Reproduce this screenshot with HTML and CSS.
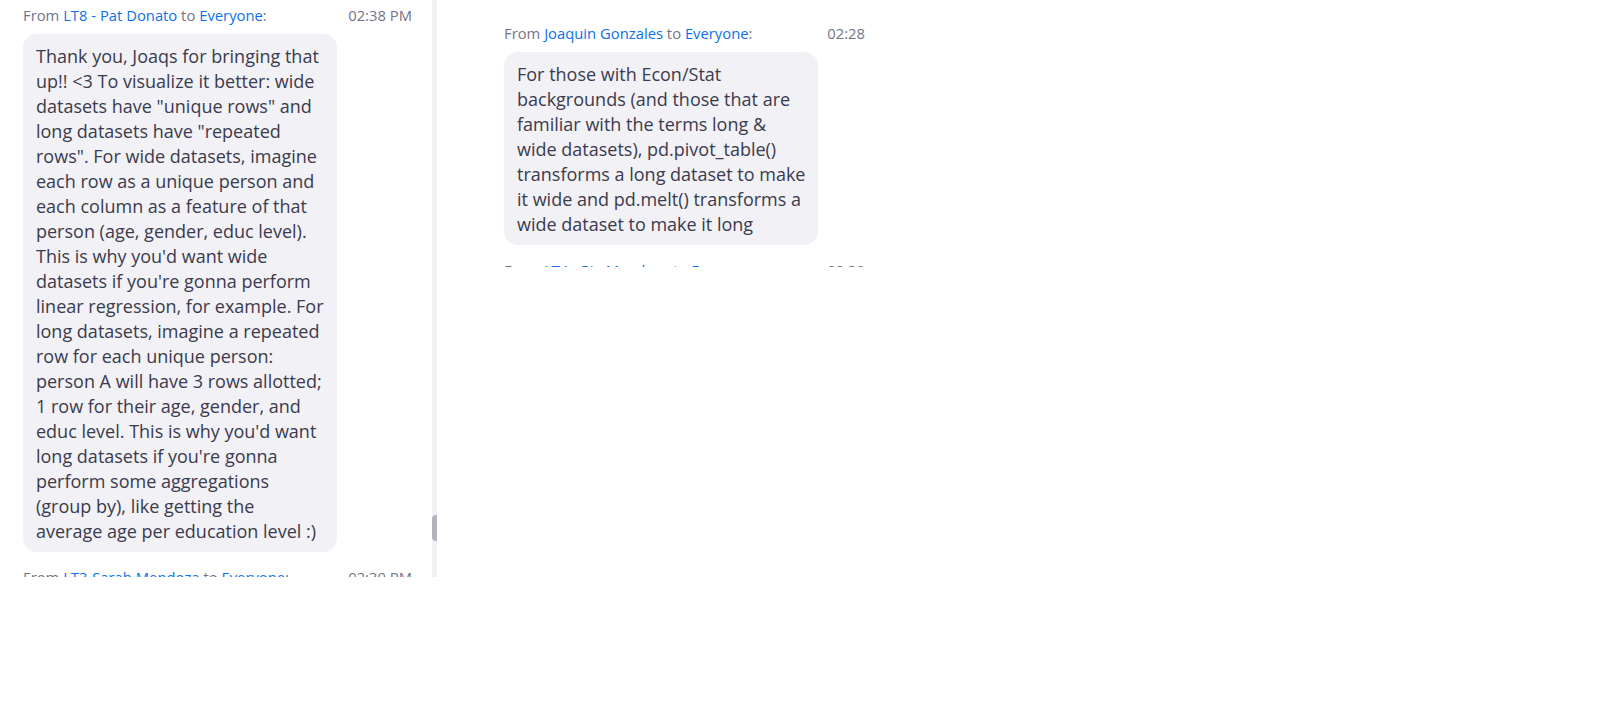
FILE: index.html
```html
<!DOCTYPE html>
<html lang="en">
<head>
<meta charset="utf-8">
<title>Chat</title>
<link rel="stylesheet" href="styles.css">
</head>
<body>
<div class="page">
  <section class="pane pane-left">
    <div class="feed">
      <div class="msg">
        <div class="msg-head">
          <span class="from">From <a class="who">LT8 - Pat Donato</a> to <a class="who">Everyone</a>:</span>
          <span class="time">02:38 PM</span>
        </div>
        <div class="bubble">Thank you, Joaqs for bringing that<br>up!! &lt;3 To visualize it better: wide<br>datasets have "unique rows" and<br>long datasets have "repeated<br>rows". For wide datasets, imagine<br>each row as a unique person and<br>each column as a feature of that<br>person (age, gender, educ level).<br>This is why you'd want wide<br>datasets if you're gonna perform<br>linear regression, for example. For<br>long datasets, imagine a repeated<br>row for each unique person:<br>person A will have 3 rows allotted;<br>1 row for their age, gender, and<br>educ level. This is why you'd want<br>long datasets if you're gonna<br>perform some aggregations<br>(group by), like getting the<br>average age per education level :)</div>
      </div>
      <div class="msg">
        <div class="msg-head">
          <span class="from">From <a class="who">LT3-Sarah Mendoza</a> to <a class="who">Everyone</a>:</span>
          <span class="time">02:39 PM</span>
        </div>
      </div>
    </div>
    <div class="track"><div class="thumb"></div></div>
  </section>
  <section class="pane pane-right">
    <div class="msg">
      <div class="msg-head">
        <span class="from">From <a class="who">Joaquin Gonzales</a> to <a class="who">Everyone</a>:</span>
        <span class="time">02:28</span>
      </div>
      <div class="bubble">For those with Econ/Stat<br>backgrounds (and those that are<br>familiar with the terms long &amp;<br>wide datasets), pd.pivot_table()<br>transforms a long dataset to make<br>it wide and pd.melt() transforms a<br>wide dataset to make it long</div>
    </div>
    <div class="msg">
      <div class="msg-head">
        <span class="from">From <a class="who">LT4 - Pia Mendoza</a> to <a class="who">Everyone</a>:</span>
        <span class="time">02:30</span>
      </div>
    </div>
  </section>
</div>
</body>
</html>
```
FILE: styles.css
```css
* { box-sizing: border-box; }
body {
  margin: 0;
  background: #ffffff;
  font-family: "Open Sans", "Noto Sans", sans-serif;
  color: #3b3b4d;
}
.page {
  display: flex;
  align-items: flex-start;
}
.pane {
  overflow: hidden;
}
.pane-left {
  display: flex;
  height: 577px;
  width: 437px;
}
.feed {
  width: 432px;
  padding: 5px 20px 0 23px;
}
.track {
  width: 5px;
  height: 577px;
  background: #f0f0f5;
  padding-top: 515px;
}
.thumb {
  width: 5px;
  height: 26px;
  background: #b2b3bd;
  border-radius: 4px 0 0 4px;
}
.pane-right {
  height: 267px;
  width: 380px;
  margin-left: 67px;
  padding-top: 23px;
}
.pane-right .msg-head { width: 361px; }
.msg { margin-bottom: 15px; }
.msg-head {
  display: flex;
  justify-content: space-between;
  font-size: 14.8px;
  line-height: 20px;
  color: #747487;
  white-space: nowrap;
}
.who { color: #0e71eb; }
.bubble {
  margin-top: 9px;
  width: 314px;
  background: #f1f1f6;
  border-radius: 14px;
  padding: 10px 10px 8px 13px;
  font-size: 18px;
  line-height: 25px;
  white-space: nowrap;
}
```
